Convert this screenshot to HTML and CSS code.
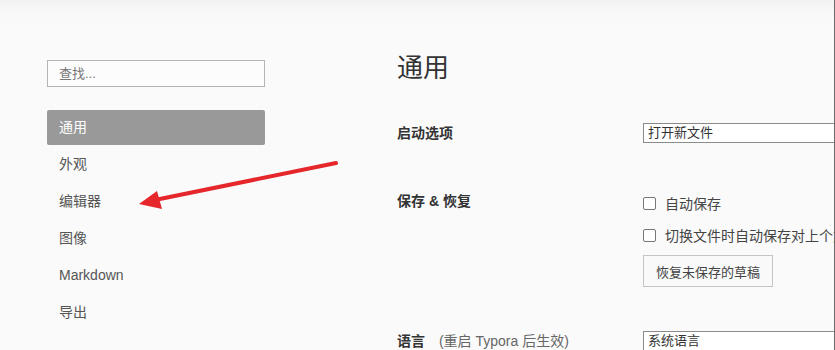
FILE: index.html
```html
<!DOCTYPE html>
<html lang="zh-CN">
<head>
    <meta charset="UTF-8">
    <meta name="viewport" content="width=device-width, initial-scale=1.0">
    <title>偏好设置</title>
    <link rel="stylesheet" href="styles.css">
</head>
<body>
    <div class="window">
        <div class="sidebar">
            <input type="text" class="search" placeholder="查找...">
            <ul class="nav">
                <li class="nav-item active">通用</li>
                <li class="nav-item">外观</li>
                <li class="nav-item">编辑器</li>
                <li class="nav-item">图像</li>
                <li class="nav-item">Markdown</li>
                <li class="nav-item">导出</li>
            </ul>
        </div>

        <div class="main">
            <h1>通用</h1>

            <div class="row row-start">
                <div class="label">启动选项</div>
                <div class="control">
                    <div class="select">打开新文件</div>
                </div>
            </div>

            <div class="row row-save">
                <div class="label">保存 &amp; 恢复</div>
                <div class="control">
                    <label class="check"><input type="checkbox"><span>自动保存</span></label>
                    <label class="check"><input type="checkbox"><span>切换文件时自动保存对上个文件的修改</span></label>
                    <button class="btn">恢复未保存的草稿</button>
                </div>
            </div>

            <div class="row row-lang">
                <div class="label">语言 <span class="hint">(重启 Typora 后生效)</span></div>
                <div class="control">
                    <div class="select">系统语言</div>
                </div>
            </div>
        </div>

        <svg class="arrow" width="835" height="350" viewBox="0 0 835 350">
            <line x1="336" y1="163" x2="150" y2="201" stroke="#e5262b" stroke-width="4" stroke-linecap="round"/>
            <polygon points="139,204 157,191 162,209" fill="#e5262b"/>
        </svg>
    </div>
</body>
</html>
```

FILE: styles.css
```css
body {
    margin: 0;
    padding: 0;
    font-family: 'Liberation Sans', 'Noto Sans CJK SC', sans-serif;
    background: #fafafa;
}
.window {
    position: relative;
    width: 835px;
    height: 350px;
    overflow: hidden;
    box-sizing: border-box;
    border-right: 1px solid #6b6b6b;
    background: linear-gradient(to bottom, #f2f2f2 0, #f9f9f9 14px, #fafafa 40px);
    display: flex;
}
.sidebar {
    width: 218px;
    margin-left: 47px;
    padding-top: 60px;
    flex-shrink: 0;
}
.search {
    display: block;
    width: 218px;
    height: 27px;
    box-sizing: border-box;
    margin: 0 0 23px;
    padding: 0 11px;
    border: 1px solid #b4b4b4;
    background: #fcfcfc;
    font-family: inherit;
    font-size: 13px;
    color: #555;
    outline: none;
}
.search::placeholder {
    color: #777;
}
.nav {
    list-style: none;
    margin: 0;
    padding: 0;
}
.nav-item {
    height: 35px;
    line-height: 35px;
    margin-bottom: 2px;
    padding-left: 12px;
    font-size: 14px;
    color: #555;
    border-radius: 2px;
}
.nav-item.active {
    background: #999;
    color: #fff;
}
.main {
    margin-left: 132px;
    flex-shrink: 0;
    width: 450px;
}
h1 {
    margin: 54px 0 0;
    font-size: 26px;
    line-height: 28px;
    font-weight: normal;
    color: #333;
}
.row {
    display: grid;
    grid-template-columns: 246px 1fr;
    align-items: start;
}
.row-start {
    margin-top: 41px;
}
.row-save {
    margin-top: 48px;
}
.row-lang {
    margin-top: 44px;
}
.label {
    font-size: 14px;
    line-height: 20px;
    font-weight: bold;
    color: #333;
}
.hint {
    margin-left: 10px;
    font-weight: normal;
    color: #666;
}
.select {
    width: 260px;
    height: 20px;
    box-sizing: border-box;
    border: 1px solid #8a8a8a;
    background: #fff;
    padding-left: 4px;
    font-size: 13px;
    line-height: 18px;
    color: #333;
    white-space: nowrap;
}
.check {
    display: flex;
    align-items: center;
    height: 24px;
    margin-bottom: 8px;
    font-size: 14px;
    color: #444;
    white-space: nowrap;
}
.check input {
    appearance: none;
    width: 13px;
    height: 13px;
    margin: 0 9px 0 0;
    border: 1px solid #777;
    border-radius: 2px;
    background: #fff;
}
.btn {
    display: block;
    width: 130px;
    height: 32px;
    margin-top: 8px;
    border: 1px solid #c4c4c4;
    background: #f9f9f9;
    font-family: inherit;
    font-size: 13px;
    color: #444;
    padding: 0;
}
.arrow {
    position: absolute;
    left: 0;
    top: 0;
    pointer-events: none;
}
```
